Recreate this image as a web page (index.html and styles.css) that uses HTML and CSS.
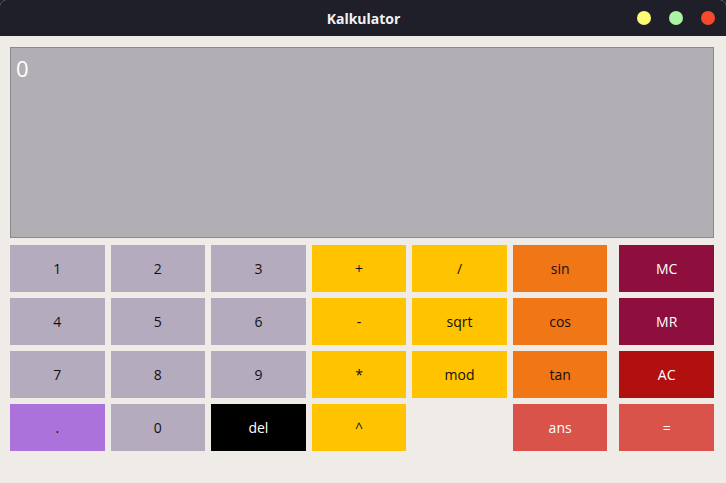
FILE: index.html
```html
<!DOCTYPE html>
<html>
<head>
<meta charset="utf-8">
<title>Kalkulator</title>
<link rel="stylesheet" href="styles.css">
</head>
<body>
<div class="window">
  <header class="titlebar">
    <span class="title">Kalkulator</span>
    <div class="controls">
      <span class="dot dot-min"></span>
      <span class="dot dot-max"></span>
      <span class="dot dot-close"></span>
    </div>
  </header>
  <main class="content">
    <div class="display">0</div>
    <div class="keys">
      <button class="key num">1</button>
      <button class="key num">2</button>
      <button class="key num">3</button>
      <button class="key op">+</button>
      <button class="key op">/</button>
      <button class="key fn">sin</button>
      <span class="spacer"></span>
      <button class="key mem">MC</button>

      <button class="key num">4</button>
      <button class="key num">5</button>
      <button class="key num">6</button>
      <button class="key op">-</button>
      <button class="key op">sqrt</button>
      <button class="key fn">cos</button>
      <span class="spacer"></span>
      <button class="key mem">MR</button>

      <button class="key num">7</button>
      <button class="key num">8</button>
      <button class="key num">9</button>
      <button class="key op">*</button>
      <button class="key op">mod</button>
      <button class="key fn">tan</button>
      <span class="spacer"></span>
      <button class="key clear">AC</button>

      <button class="key dot-key">.</button>
      <button class="key num">0</button>
      <button class="key del">del</button>
      <button class="key op">^</button>
      <span class="empty"></span>
      <button class="key res">ans</button>
      <span class="spacer"></span>
      <button class="key res">=</button>
    </div>
  </main>
</div>
</body>
</html>
```
FILE: styles.css
```css
* { box-sizing: border-box; }
html, body {
  margin: 0;
  padding: 0;
  width: 726px;
  height: 483px;
  overflow: hidden;
  background: #1f1f29;
}
.window {
  width: 726px;
  height: 483px;
  display: flex;
  flex-direction: column;
  background: #efebe7;
  border-top-left-radius: 6px;
  border-top-right-radius: 6px;
  overflow: hidden;
  font-family: "Open Sans", "DejaVu Sans", sans-serif;
}
.titlebar {
  height: 36px;
  flex: none;
  background: #1f1f29;
  display: flex;
  align-items: center;
  justify-content: center;
  position: relative;
}
.title {
  color: #f2f2f2;
  font-weight: 700;
  font-size: 14px;
  margin-left: 1px;
}
.controls {
  position: absolute;
  right: 11px;
  top: 11px;
  display: flex;
  gap: 18px;
}
.dot {
  width: 14px;
  height: 14px;
  border-radius: 50%;
  display: block;
}
.dot-min { background: #fbfb74; }
.dot-max { background: #a9f5a1; }
.dot-close { background: #f74a2b; }
.content {
  flex: 1;
  padding: 11px 12px 0 10px;
  display: flex;
  flex-direction: column;
}
.display {
  height: 191px;
  background: #b2afb4;
  border: 1px solid #8b898e;
  color: #ffffff;
  font-size: 22px;
  line-height: 1;
  padding: 9px 0 0 5px;
}
.keys {
  margin-top: 7px;
  display: grid;
  grid-template-columns: repeat(6, 1fr) 0 1fr;
  grid-auto-rows: 47px;
  column-gap: 6px;
  row-gap: 6px;
}
.key {
  border: none;
  margin: 0;
  padding: 0;
  font-family: "Open Sans", "DejaVu Sans", sans-serif;
  font-size: 14px;
  color: #111;
  display: flex;
  align-items: center;
  justify-content: center;
}
.num { background: #b4abbe; }
.op { background: #ffc300; }
.fn { background: #f07616; }
.mem { background: #8e0e3d; color: #fff; }
.clear { background: #b20f0f; color: #fff; }
.res { background: #d9534a; color: #fff; }
.dot-key { background: #ab72db; }
.del { background: #000; color: #fff; }
```
